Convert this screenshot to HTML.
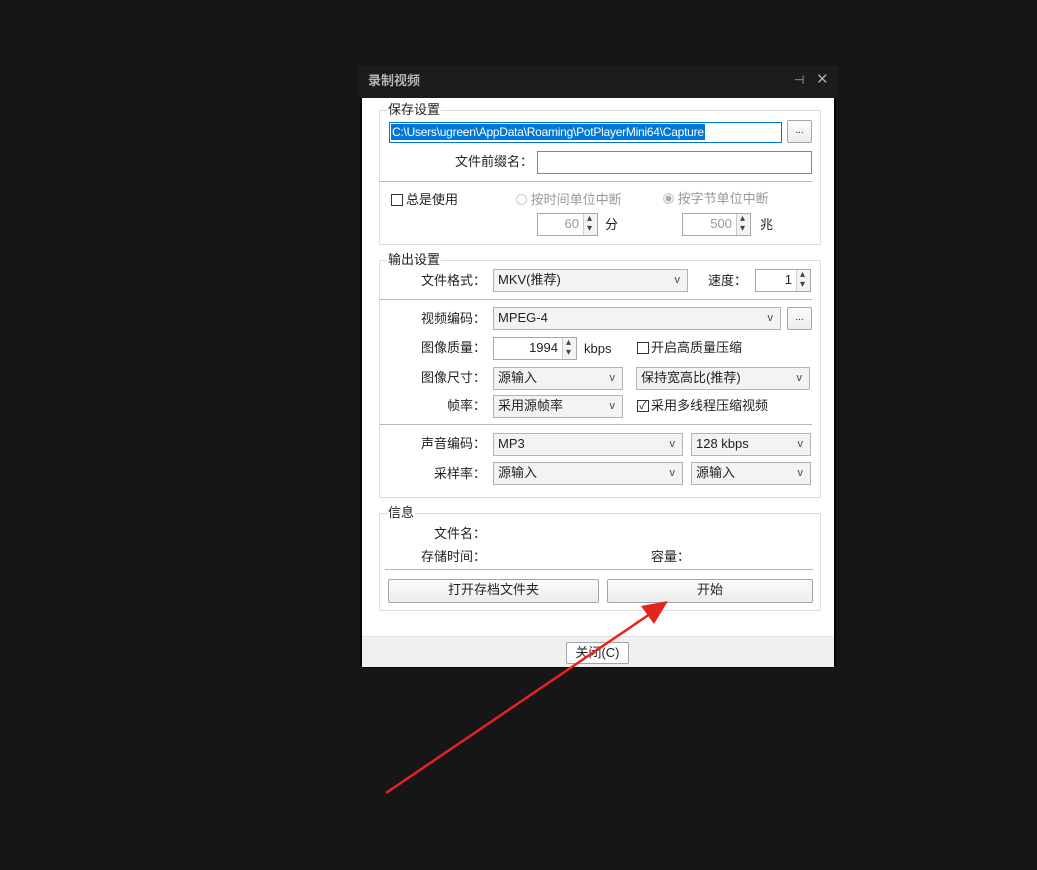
<!DOCTYPE html>
<html><head><meta charset="utf-8"><style>
*{margin:0;padding:0;box-sizing:border-box}
body{width:1037px;height:870px;background:#161619;position:relative;overflow:hidden;font-family:"Liberation Sans","Noto Sans CJK SC",sans-serif;font-size:13px;color:#222}
.a{position:absolute;white-space:nowrap;line-height:1}
.win{position:absolute;left:360px;top:67px;width:476px;height:601px;background:#fff;border:2px solid #050505;border-top:0}
.title{position:absolute;left:358px;top:66px;width:480px;height:32px;background:#1c1c1c}
.grp{position:absolute;border:1px solid #dcdcdc}
.leg{position:absolute;background:#fff;padding:0 1px;font-size:13px;line-height:14px}
.box{position:absolute;border:1px solid #a8a8a8;background:#fff}
.sel{position:absolute;border:1px solid #b4b4b4;background:#f3f3f3;font-size:13px;line-height:20px;padding-left:4px}
.sel:after{content:"v";position:absolute;right:7px;top:0;font-size:11px;color:#444}
.sep{position:absolute;height:1px;background:#b8b8b8}
.btn{position:absolute;border:1px solid #a5a5a5;background:linear-gradient(#fcfcfc,#ececec);text-align:center;line-height:20px;border-radius:2px}
.lab{position:absolute;text-align:right;width:120px;line-height:1}
.cb{position:absolute;width:12px;height:12px;border:1px solid #333;background:#fff}
.spin{position:absolute;border:1px solid #a8a8a8;background:#fff;text-align:right;line-height:20px;padding-right:18px}
.spin i{position:absolute;right:0;top:0;width:14px;height:100%;border-left:1px solid #ccc;background:#f3f3f3}
.spin i:before{content:"▴";position:absolute;left:3px;top:-5px;font-size:10px;font-style:normal;color:#444}
.spin i:after{content:"▾";position:absolute;left:3px;top:5px;font-size:10px;font-style:normal;color:#444}
.dis{color:#999}
</style></head><body>
<div class="win"></div>
<div class="title"></div>
<div class="a" style="left:368px;top:74px;color:#b4b4b4;font-weight:bold;font-size:13px">录制视频</div>
<div class="a" style="left:794px;top:74px;color:#aaa;font-size:12px">⊣</div>
<div class="a" style="left:816px;top:72px;color:#aaa;font-size:15px">✕</div>

<!-- group 1 -->
<div class="grp" style="left:379px;top:110px;width:442px;height:135px"></div>
<div class="leg a" style="left:387px;top:103px">保存设置</div>
<div class="box" style="left:389px;top:122px;width:393px;height:21px;border-color:#0078d7"></div>
<div class="a" style="left:391px;top:124px;height:16px;background:#0078d7;color:#fff;line-height:16px;padding:0 1px;font-size:12px;letter-spacing:-0.25px">C:\Users\ugreen\AppData\Roaming\PotPlayerMini64\Capture</div>
<div class="btn" style="left:787px;top:120px;width:25px;height:23px;font-size:10px">...</div>
<div class="lab" style="left:413px;top:155px">文件前缀名：</div>
<div class="box" style="left:537px;top:151px;width:275px;height:23px;border-color:#888"></div>
<div class="sep" style="left:380px;top:181px;width:432px"></div>
<div class="cb" style="left:391px;top:194px"></div>
<div class="a" style="left:406px;top:193px">总是使用</div>
<div class="a dis" style="left:516px;top:193px"><span style="display:inline-block;width:11px;height:11px;border:1px solid #ccc;border-radius:50%;vertical-align:-1px"></span> 按时间单位中断</div>
<div class="a dis" style="left:663px;top:192px"><span style="display:inline-block;width:11px;height:11px;border:1px solid #ccc;border-radius:50%;vertical-align:-1px;background:radial-gradient(#aaa 2.5px,#eee 3px)"></span> 按字节单位中断</div>
<div class="spin dis" style="left:537px;top:213px;width:61px;height:23px">60<i></i></div>
<div class="a" style="left:605px;top:218px">分</div>
<div class="spin dis" style="left:682px;top:213px;width:69px;height:23px">500<i></i></div>
<div class="a" style="left:760px;top:218px">兆</div>

<!-- group 2 -->
<div class="grp" style="left:379px;top:260px;width:442px;height:238px"></div>
<div class="leg a" style="left:387px;top:253px">输出设置</div>
<div class="lab" style="left:366px;top:274px">文件格式：</div>
<div class="sel" style="left:493px;top:269px;width:195px;height:23px">MKV(推荐)</div>
<div class="a" style="left:708px;top:274px">速度：</div>
<div class="spin" style="left:755px;top:269px;width:56px;height:23px">1<i></i></div>
<div class="sep" style="left:380px;top:299px;width:432px"></div>
<div class="lab" style="left:366px;top:312px">视频编码：</div>
<div class="sel" style="left:493px;top:307px;width:288px;height:23px">MPEG-4</div>
<div class="btn" style="left:787px;top:307px;width:25px;height:23px;font-size:10px">...</div>
<div class="lab" style="left:366px;top:341px">图像质量：</div>
<div class="spin" style="left:493px;top:337px;width:84px;height:23px">1994<i></i></div>
<div class="a" style="left:584px;top:342px">kbps</div>
<div class="cb" style="left:637px;top:342px"></div>
<div class="a" style="left:651px;top:341px">开启高质量压缩</div>
<div class="lab" style="left:366px;top:371px">图像尺寸：</div>
<div class="sel" style="left:493px;top:367px;width:130px;height:23px">源输入</div>
<div class="sel" style="left:636px;top:367px;width:174px;height:23px">保持宽高比(推荐)</div>
<div class="lab" style="left:366px;top:399px">帧率：</div>
<div class="sel" style="left:493px;top:395px;width:130px;height:23px">采用源帧率</div>
<div class="cb" style="left:637px;top:400px;font-size:11px;line-height:10px;text-align:center">✓</div>
<div class="a" style="left:651px;top:399px">采用多线程压缩视频</div>
<div class="sep" style="left:380px;top:424px;width:432px"></div>
<div class="lab" style="left:366px;top:437px">声音编码：</div>
<div class="sel" style="left:493px;top:433px;width:190px;height:23px">MP3</div>
<div class="sel" style="left:691px;top:433px;width:120px;height:23px">128 kbps</div>
<div class="lab" style="left:366px;top:467px">采样率：</div>
<div class="sel" style="left:493px;top:462px;width:190px;height:23px">源输入</div>
<div class="sel" style="left:691px;top:462px;width:120px;height:23px">源输入</div>

<!-- group 3 -->
<div class="grp" style="left:379px;top:513px;width:442px;height:98px"></div>
<div class="leg a" style="left:387px;top:506px">信息</div>
<div class="lab" style="left:366px;top:527px">文件名：</div>
<div class="lab" style="left:366px;top:550px">存储时间：</div>
<div class="a" style="left:651px;top:550px">容量：</div>
<div class="sep" style="left:385px;top:569px;width:428px"></div>
<div class="btn" style="left:388px;top:579px;width:211px;height:24px">打开存档文件夹</div>
<div class="btn" style="left:607px;top:579px;width:206px;height:24px">开始</div>

<!-- footer -->
<div class="a" style="left:362px;top:636px;width:472px;height:31px;background:#f0f0f0;border-top:1px solid #e2e2e2"></div>
<div class="btn" style="left:566px;top:642px;width:63px;height:22px;background:#fdfdfd">关闭(C)</div>

<svg width="1037" height="870" style="position:absolute;left:0;top:0">
<line x1="386" y1="793" x2="650" y2="614" stroke="#e8231e" stroke-width="2.5"/>
<polygon points="668,601 641,606 654,624" fill="#e8231e"/>
</svg>
</body></html>
